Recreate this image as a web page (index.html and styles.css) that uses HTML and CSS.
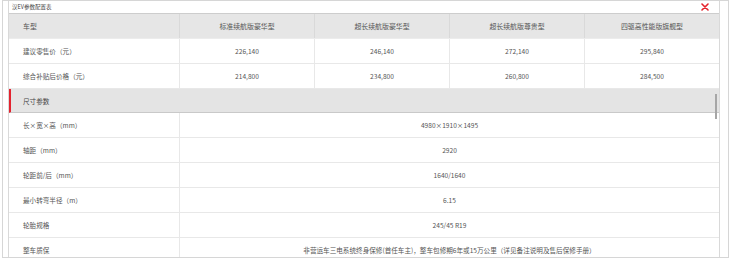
FILE: index.html
```html
<!DOCTYPE html>
<html lang="zh-CN">
<head>
<meta charset="utf-8">
<title>汉EV参数配置表</title>
<link rel="stylesheet" href="styles.css">
</head>
<body>
<div class="frame">
  <div class="panel">
    <div class="titlebar">
      <span class="title">汉EV参数配置表</span>
      <svg class="close" width="8" height="8" viewBox="0 0 8 8"><path d="M1 1L7 7M7 1L1 7" stroke="#e5232c" stroke-width="1.6" stroke-linecap="round"/></svg>
    </div>
    <div class="table">
      <div class="row head">
        <div class="cell first">车型</div>
        <div class="cell">标准续航版豪华型</div>
        <div class="cell">超长续航版豪华型</div>
        <div class="cell">超长续航版尊贵型</div>
        <div class="cell last">四驱高性能版旗舰型</div>
      </div>
      <div class="row">
        <div class="cell first">建议零售价（元）</div>
        <div class="cell">226,140</div>
        <div class="cell">246,140</div>
        <div class="cell">272,140</div>
        <div class="cell last">295,840</div>
      </div>
      <div class="row">
        <div class="cell first">综合补贴后价格（元）</div>
        <div class="cell">214,800</div>
        <div class="cell">234,800</div>
        <div class="cell">260,800</div>
        <div class="cell last">284,500</div>
      </div>
      <div class="section">尺寸参数</div>
      <div class="row span">
        <div class="cell first">长×宽×高（mm）</div>
        <div class="cell wide">4980×1910×1495</div>
      </div>
      <div class="row span">
        <div class="cell first">轴距（mm）</div>
        <div class="cell wide">2920</div>
      </div>
      <div class="row span">
        <div class="cell first">轮距前/后（mm）</div>
        <div class="cell wide">1640/1640</div>
      </div>
      <div class="row span">
        <div class="cell first">最小转弯半径（m）</div>
        <div class="cell wide">6.15</div>
      </div>
      <div class="row span">
        <div class="cell first">轮胎规格</div>
        <div class="cell wide">245/45 R19</div>
      </div>
      <div class="row span">
        <div class="cell first">整车质保</div>
        <div class="cell wide">非营运车三电系统终身保修(首任车主)，整车包修期6年或15万公里（详见备注说明及售后保修手册）</div>
      </div>
    </div>
    <div class="thumb"></div>
  </div>
</div>
</body>
</html>
```

FILE: styles.css
```css
html, body {
  margin: 0;
  padding: 0;
  background: #ffffff;
}
body {
  font-family: "Noto Sans CJK SC", "Open Sans", sans-serif;
  color: #555555;
  width: 730px;
  height: 259px;
  overflow: hidden;
}
.frame {
  box-sizing: border-box;
  margin-left: 2px;
  width: 727px;
  height: 258px;
  border: 1px solid #d6d6d6;
  overflow: hidden;
}
.panel {
  position: relative;
  box-sizing: border-box;
  margin-left: 5px;
  width: 712px;
  height: 256px;
  border-left: 1px solid #d9d9d9;
  border-right: 1px solid #d9d9d9;
  overflow: hidden;
}
.titlebar {
  height: 12px;
  display: flex;
  align-items: center;
  justify-content: space-between;
  padding: 0 10px 0 3px;
}
.title {
  font-size: 5.5px;
  line-height: 12px;
  color: #444444;
}
.close {
  display: block;
  margin-top: -1px;
}
.table {
  width: 710px;
}
.row {
  display: grid;
  grid-template-columns: 171px 135px 135px 135px 134px;
  height: 25px;
  box-sizing: border-box;
  border-bottom: 1px solid #e8e8e8;
}
.row.span {
  grid-template-columns: 171px 539px;
}
.row.head {
  height: 26px;
  background: #e6e6e6;
  border-top: 1px solid #cdcdcd;
  border-bottom: 1px solid #ececec;
}
.cell {
  display: flex;
  align-items: center;
  justify-content: center;
  font-size: 6.6px;
  white-space: nowrap;
  border-right: 1px solid #e8e8e8;
}
.head .cell {
  font-size: 6.9px;
  border-right-color: #d9d9d9;
}
.cell.last, .cell.wide {
  border-right: none;
}
.cell.first {
  justify-content: flex-start;
  padding-left: 14px;
}
.section {
  box-sizing: border-box;
  height: 24px;
  background: #e4e4e4;
  border-left: 2px solid #e3232f;
  border-bottom: 1px solid #c9c9c9;
  padding-left: 12px;
  display: flex;
  align-items: center;
  font-size: 6.6px;
  color: #444444;
}
.thumb {
  position: absolute;
  left: 706px;
  top: 93px;
  width: 2px;
  height: 25px;
  background: #a6a6a6;
}
```
